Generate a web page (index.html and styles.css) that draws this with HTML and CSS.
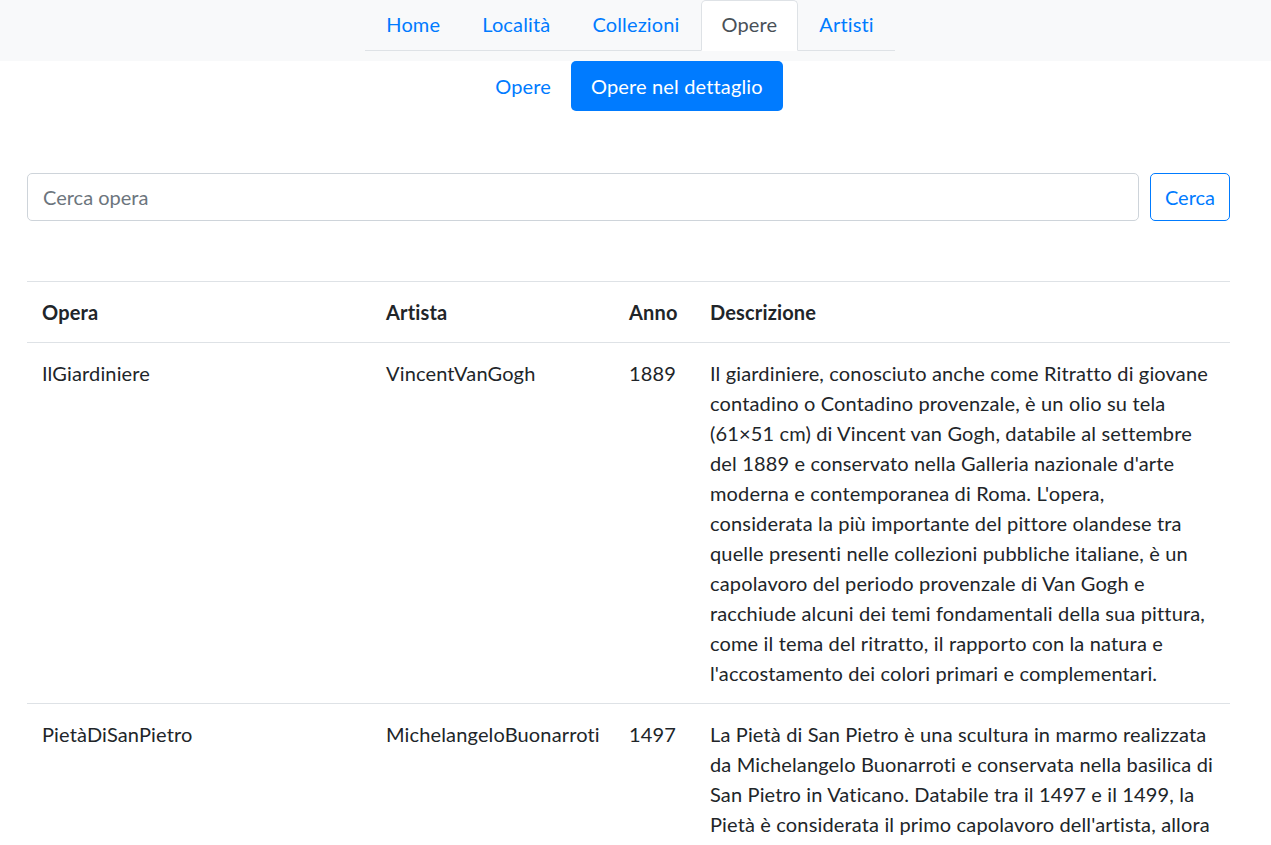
FILE: index.html
```html
<!DOCTYPE html>
<html lang="it">
<head>
<meta charset="utf-8">
<title>Opere nel dettaglio</title>
<link rel="stylesheet" href="styles.css">
</head>
<body>
<div class="page">
  <header class="topbar">
    <ul class="tabs">
      <li><a class="tab" href="#">Home</a></li>
      <li><a class="tab" href="#">Località</a></li>
      <li><a class="tab" href="#">Collezioni</a></li>
      <li><a class="tab active" href="#">Opere</a></li>
      <li><a class="tab" href="#">Artisti</a></li>
    </ul>
  </header>
  <nav class="pills">
    <a class="pill" href="#">Opere</a>
    <a class="pill active" href="#">Opere nel dettaglio</a>
  </nav>
  <main class="content">
    <form class="search">
      <input class="search-input" type="text" placeholder="Cerca opera">
      <button class="search-btn" type="button">Cerca</button>
    </form>
    <table class="works">
      <thead>
        <tr>
          <th class="c-opera">Opera</th>
          <th class="c-artista">Artista</th>
          <th class="c-anno">Anno</th>
          <th class="c-desc">Descrizione</th>
        </tr>
      </thead>
      <tbody>
        <tr>
          <td>IlGiardiniere</td>
          <td>VincentVanGogh</td>
          <td>1889</td>
          <td>Il giardiniere, conosciuto anche come Ritratto di giovane contadino o Contadino provenzale, è un olio su tela (61×51 cm) di Vincent van Gogh, databile al settembre del 1889 e conservato nella Galleria nazionale d'arte moderna e contemporanea di Roma. L'opera, considerata&nbsp;la più importante del pittore olandese tra quelle presenti nelle collezioni pubbliche italiane, è un capolavoro del periodo provenzale di Van Gogh e racchiude alcuni dei temi fondamentali della sua pittura, come il tema del ritratto, il rapporto con la natura e l'accostamento dei colori primari e complementari.</td>
        </tr>
        <tr>
          <td>PietàDiSanPietro</td>
          <td>MichelangeloBuonarroti</td>
          <td>1497</td>
          <td>La Pietà di San Pietro è una scultura in marmo realizzata da Michelangelo Buonarroti e conservata nella basilica di San Pietro in Vaticano. Databile tra il 1497 e il 1499, la Pietà è considerata il primo capolavoro dell'artista, allora poco più che ventenne, ed è una delle opere più celebri della scultura rinascimentale.</td>
        </tr>
      </tbody>
    </table>
  </main>
</div>
</body>
</html>
```

FILE: styles.css
```css
html, body {
  margin: 0;
  padding: 0;
  background: #fff;
}
body {
  font-family: Lato, "Open Sans", sans-serif;
  font-size: 20px;
  line-height: 30px;
  letter-spacing: 0.15px;
  color: #212529;
}
.page {
  margin-right: 17px;
}
a {
  text-decoration: none;
  color: #007bff;
}
.topbar {
  background: #f8f9fa;
  padding-bottom: 10px;
  display: flex;
  justify-content: center;
  margin-right: -17px;
  padding-right: 11px;
}
.tabs {
  list-style: none;
  margin: 0;
  padding: 0;
  display: flex;
  border-bottom: 1px solid #dee2e6;
}
.tabs li {
  margin-bottom: -1px;
}
.tab {
  display: block;
  padding: 8px 20px 11px;
  border: 1px solid transparent;
  border-radius: 5px 5px 0 0;
}
.tab.active {
  color: #495057;
  background: #fff;
  border-color: #dee2e6 #dee2e6 #fff;
}
.pills {
  display: flex;
  justify-content: center;
  padding-left: 4px;
}
.pill {
  display: block;
  padding: 10px 20px;
  border-radius: 5px;
}
.pill.active {
  background: #007bff;
  color: #fff;
}
.content {
  padding: 62px 24px 0 27px;
}
.search {
  display: flex;
  gap: 11px;
  margin: 0 0 60px;
}
.search-input {
  flex: 1;
  height: 48px;
  box-sizing: border-box;
  padding: 7px 15px;
  border: 1px solid #ced4da;
  border-radius: 5px;
  font: inherit;
  color: #495057;
  outline: none;
}
.search-input::placeholder {
  color: #6c757d;
}
.search-btn {
  width: 80px;
  height: 48px;
  box-sizing: border-box;
  border: 1px solid #007bff;
  border-radius: 5px;
  background: #fff;
  color: #007bff;
  font: inherit;
  padding: 0;
}
.works {
  width: 100%;
  border-collapse: collapse;
  table-layout: fixed;
}
.works th, .works td {
  padding: 15px;
  text-align: left;
  vertical-align: top;
  border-top: 1px solid #dee2e6;
}
.works th {
  font-weight: 700;
  border-bottom: 1px solid #dee2e6;
}
.c-opera { width: 314px; }
.c-artista { width: 213px; }
.c-anno { width: 51px; }
```
